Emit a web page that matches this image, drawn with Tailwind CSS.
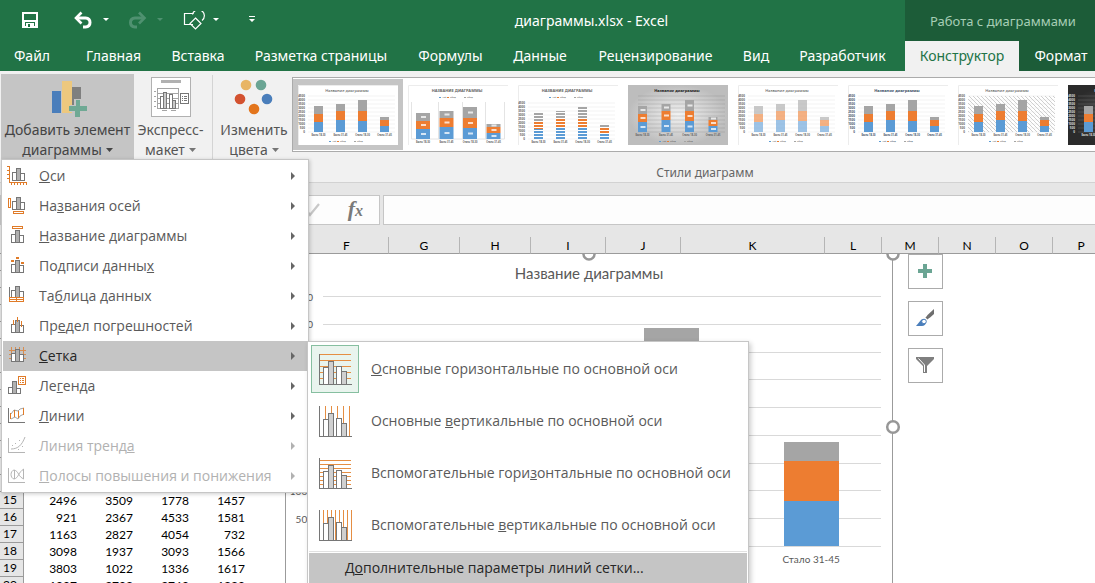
<!DOCTYPE html>
<html lang="ru">
<head>
<meta charset="utf-8">
<title>диаграммы.xlsx - Excel</title>
<script src="https://cdn.jsdelivr.net/npm/@tailwindcss/browser@4"></script>
</head>
<body class="relative flex h-screen flex-col overflow-hidden bg-white font-['Noto_Sans',sans-serif] text-[14px] leading-5 text-[#5a5a5a]">

<!-- shared drawings -->
<svg class="hidden" aria-hidden="true">
  <symbol id="bars" viewBox="0 0 13 13">
    <g stroke="#767676" fill="#fff"><path d="M.5 4.5h4v8h-4zM8.5 5.5h4v7h-4z"/><path fill="#b1b1b1" d="M4.500 .5h4v12h-4z"/></g>
  </symbol>
  <symbol id="chart4" viewBox="0 0 34 34">
    <g stroke="#767676" fill="#fff"><path d="M4.500 13.500h5v17h-5zM17.500 12.500h5v18h-5z"/><path fill="#d0d0d0" d="M9.500 7.500h5v23h-5zM22.500 17.500h5v13h-5z"/><path fill="none" stroke="#767676" d="M.5 0v30.500h32"/></g>
  </symbol>
</svg>

<header class="flex h-[71px] shrink-0 bg-[#217346] text-white">
  <div class="flex min-w-0 flex-1 flex-col">
    <div class="flex h-[41px] items-center">
      <div class="flex w-[278px] items-center pl-[20px]">
        <button aria-label="Сохранить" class="h-5 w-5"><svg width="20" height="20" viewBox="0 0 20 20" shape-rendering="crispEdges"><path fill="#fff" d="M2 1h16v16H2z"/><path fill="#217346" d="M4 3h12v6H4zM5 11h10v4H5z"/><path fill="#fff" d="M6 12h8v5H6z"/><path fill="#217346" d="M8 13h2v3H8z"/></svg></button>
        <button aria-label="Отменить" class="ml-[33px] h-5 w-5"><svg width="20" height="20" viewBox="0 0 20 20" fill="none" stroke="#fff" stroke-width="3"><path d="M4 7h8.500c6 .5 6 8.500 0 9H10"/><path stroke-width="2.600" d="M8.500 1.500L3 7l5.500 5.500"/></svg></button>
        <button aria-label="Список отмены" class="ml-[9px] h-5 w-2"><svg width="8" height="20"><path fill="#fff" d="M1 7h6L4 10z"/></svg></button>
        <button aria-label="Вернуть" disabled class="ml-[17px] h-5 w-5"><svg width="20" height="20" viewBox="0 0 20 20" fill="none" stroke="#4f9170" stroke-width="3"><path d="M16 7H8c-6 .5-6 8.500 0 9h2"/><path stroke-width="2.600" d="M12 1.500L17.500 7 12 12.500"/></svg></button>
        <button aria-label="Список возврата" disabled class="ml-[9px] h-5 w-2"><svg width="8" height="20"><path fill="#4f9170" d="M1 7h6L4 10z"/></svg></button>
        <button aria-label="Фигуры" class="ml-[19px] h-5 w-[22px]"><svg width="22" height="20" viewBox="0 0 22 20" fill="none" stroke="#fff" stroke-width="1.200"><path d="M10 13.500H1.500v-11h9"/><path d="M9.500 3.500a6 6 0 1 1 9.500 6"/><path d="M12.500 7l5.500 5.500-5.500 5.500L7 12.500z"/></svg></button>
        <button aria-label="Список фигур" class="ml-[7px] h-5 w-2"><svg width="8" height="20"><path fill="#fff" d="M1 7h6L4 10z"/></svg></button>
        <button aria-label="Настройка панели" class="ml-[28px] h-5 w-2"><svg width="8" height="20"><path fill="#fff" d="M1 5h6v1H1zM1 8h6l-3 3z"/></svg></button>
      </div>
      <h1 class="flex-1 text-center">диаграммы.xlsx - Excel</h1>
    </div>
    <nav class="flex h-[30px] items-center whitespace-nowrap">
      <button class="w-[70px] pr-[6px] text-center">Файл</button>
      <button class="w-[87px] text-center">Главная</button>
      <button class="w-[82px] text-center">Вставка</button>
      <button class="w-[164px] text-center">Разметка страницы</button>
      <button class="w-[95px] text-center">Формулы</button>
      <button class="w-[84px] text-center">Данные</button>
      <button class="w-[147px] text-center">Рецензирование</button>
      <button class="w-[54px] text-center">Вид</button>
      <button class="w-[119px] text-center">Разработчик</button>
    </nav>
  </div>
  <div class="flex w-[190px] shrink-0 flex-col bg-[#1c5c38]">
    <div class="flex h-[41px] items-center justify-center pl-[6px] text-[13px] text-[#a6cdb5]">Работа с диаграммами</div>
    <div class="flex h-[30px] whitespace-nowrap">
      <button class="w-[114px] bg-[#f1f1f1] text-center text-[#217346]">Конструктор</button>
      <button class="flex-1 pl-[8px] text-center">Формат</button>
    </div>
  </div>
</header>

<section class="flex h-[112px] shrink-0 items-start overflow-hidden border-b border-[#d2d2d2] bg-[#f1f1f1] text-[#555]">
  <button class="mt-[3px] ml-px flex h-[86px] w-[133px] shrink-0 flex-col items-center whitespace-nowrap bg-[#c5c5c5] text-[#444]">
    <svg width="40" height="46" viewBox="0 0 40 46"><g shape-rendering="crispEdges"><path fill="#4a7ebb" d="M4 17h9v22H4z"/><path fill="#edc87e" d="M14 7h10v32H14z"/><path fill="#7f7f7f" d="M24 13h9v18h-9z"/><path fill="#c5c5c5" d="M26 25h8v6h6v8h-14v-1h-4v-7h4z"/><path fill="#6fa994" d="M28 26h4v6h7v5h-7v6h-5v-6h-6v-5h7z"/></g></svg>
    <span class="block">Добавить элемент</span>
    <span class="flex items-center gap-1">диаграммы<svg width="7" height="4"><path fill="#444" d="M0 0h7L3.500 4z"/></svg></span>
  </button>
  <button class="mt-[3px] ml-px flex h-[86px] w-[71px] shrink-0 flex-col items-center whitespace-nowrap">
    <svg width="42" height="46" viewBox="0 0 42 46" shape-rendering="crispEdges"><path fill="#fff" stroke="#b1b1b1" d="M1.500 3.500h39v39h-39z"/><path fill="#b1b1b1" d="M11 6h20v3H11z"/><g stroke="#767676" fill="#fff"><path stroke="#a5a5a5" fill="none" d="M7.500 14.500h21v20h-21zM7.500 19.500h21M7.500 24.500h21M7.500 29.500h21M3.500 17.500h2M3.500 22.500h2M3.500 27.500h2M3.500 32.500h2M11.500 36.500h5M20.500 36.500h5"/><path d="M10.500 22.500h3v12h-3zM19.500 20.500h3v14h-3z"/><path fill="#c8c8c8" d="M13.500 18.500h3v16h-3zM22.500 26.500h3v8h-3z"/><path d="M30.500 19.500h8v10h-8z"/><path d="M32 22.500h1M34 22.500h3M32 24.500h1M34 24.500h3M32 26.500h1M34 26.500h3"/></g></svg>
    <span class="block">Экспресс-</span>
    <span class="flex items-center gap-1">макет<svg width="7" height="4"><path fill="#767676" d="M0 0h7L3.500 4z"/></svg></span>
  </button>
  <div class="mt-[4px] ml-[6px] h-[90px] w-px shrink-0 bg-[#d4d4d4]"></div>
  <button class="mt-[3px] ml-[6px] flex h-[86px] w-[70px] shrink-0 flex-col items-center whitespace-nowrap">
    <svg width="42" height="46" viewBox="0 0 42 46"><circle cx="13" cy="11" r="5.300" fill="#e8b565"/><circle cx="28" cy="11" r="5.300" fill="#6ba594"/><circle cx="7" cy="25" r="5.300" fill="#d35230"/><circle cx="34" cy="25" r="5.300" fill="#4a7ebb"/><circle cx="21" cy="35" r="5.300" fill="#e3751c"/></svg>
    <span class="block">Изменить</span>
    <span class="flex items-center gap-1">цвета<svg width="7" height="4"><path fill="#767676" d="M0 0h7L3.500 4z"/></svg></span>
  </button>
  <div class="mt-[6px] ml-[3px] w-[826px] shrink-0">
    <div id="gallery" class="flex h-[75px] items-center border border-[#ababab] bg-white"></div>
    <div class="pt-[11px] text-center text-[12px] text-[#666]">Стили диаграмм</div>
  </div>
</section>

<div class="flex h-[54px] shrink-0 items-center bg-[#e6e6e6]">
  <div class="flex h-[30px] w-[380px] shrink-0 items-center justify-end border border-[#c6c6c6] bg-[#fdfdfd] pr-[16px]">
    <svg width="14" height="20" viewBox="0 0 14 20" class="mr-[28px]"><path d="M1 11l3 4L13 4" fill="none" stroke="#c8c8c8" stroke-width="2.200"/></svg>
    <button aria-label="Вставить функцию" class="font-['Liberation_Serif',serif] text-[22px] font-bold italic text-[#7a7a7a]">f<span class="text-[16px]">x</span></button>
  </div>
  <input aria-label="Строка формул" class="ml-[3px] h-[30px] min-w-0 flex-1 border border-r-0 border-[#c6c6c6] bg-[#fdfdfd] px-2">
</div>

<main class="relative min-h-0 flex-1 overflow-hidden font-[Lato,sans-serif] text-[12px] text-black">
  <table class="w-[1110px] table-fixed border-separate border-spacing-0 leading-4">
    <thead>
      <tr id="letters" class="h-[17px] bg-[#e6e6e6] leading-[14px]"></tr>
    </thead>
    <tbody id="rows"></tbody>
  </table>

  <!-- chart object floating over the cells -->
  <div class="absolute top-[17px] left-[285px] h-[400px] w-[608px] overflow-hidden border-x border-[#9b9b9b] bg-white text-[#595959]">
    <h2 class="pt-[9px] text-center text-[15px] leading-5">Название диаграммы</h2>
    <div class="mt-[13px] grid h-[251px] pr-[11px] pl-[7px] text-[10px]">
      <div id="scale" class="flex flex-col justify-between [grid-area:1/1]"></div>
      <div id="columns" class="ml-[29px] grid grid-cols-4 items-end pb-px [grid-area:1/1]"></div>
    </div>
    <div class="mr-[11px] ml-[36px] grid grid-cols-4 pt-[4px] text-center text-[10px] leading-4">
      <span>Было 18-30</span><span>Было 31-45</span><span>Стало 18-30</span><span>Стало 31-45</span>
    </div>
  </div>
  <div class="absolute top-[17px] left-[580px] h-[7px] w-[18px] overflow-hidden"><svg class="block" width="18" height="7"><circle cx="9" cy="0" r="5.500" fill="#fff" stroke="#979797" stroke-width="2.500"/></svg></div>
  <div class="absolute top-[17px] left-[884px] h-[7px] w-[18px] overflow-hidden"><svg class="block" width="18" height="7"><circle cx="9" cy="0" r="5.500" fill="#fff" stroke="#979797" stroke-width="2.500"/></svg></div>
  <svg class="absolute top-[181px] left-[884px]" width="18" height="18"><circle cx="9" cy="9" r="5.800" fill="#fff" stroke="#979797" stroke-width="2.500"/></svg>

  <div class="absolute top-[17px] left-[908px] flex flex-col gap-[12px]">
    <button aria-label="Элементы диаграммы" class="h-[35px] w-[35px] border border-[#ababab] bg-white"><svg width="33" height="33" shape-rendering="crispEdges"><path fill="#6ba594" d="M14 9h4v5h5v4h-5v5h-4v-5H9v-4h5z"/></svg></button>
    <button aria-label="Стили диаграмм" class="h-[35px] w-[35px] border border-[#ababab] bg-white"><svg width="33" height="33"><path fill="#6e6e6e" d="M25 7v5l-4.500 4-2.500-2.500z"/><path stroke="#6e6e6e" stroke-width="3" d="M19.500 14.500l-2 2"/><path fill="#4a7ebb" d="M7 24l5-6c2-2 5-.5 5 2s-2 4-4 4z"/><circle cx="15" cy="19.500" r="2.300" fill="#fff" stroke="#4a7ebb"/></svg></button>
    <button aria-label="Фильтры диаграммы" class="h-[35px] w-[35px] border border-[#ababab] bg-white"><svg width="33" height="33"><path fill="#7f7f7f" d="M7 8h18v2l-7 7v7h-4v-7L7 10z"/><path stroke="#fff" fill="none" d="M9.500 9.500l6 6.500v7"/></svg></button>
  </div>
</main>

<!-- drop-down menu -->
<div role="menu" id="menu" class="absolute top-[159px] left-px flex w-[308px] flex-col border border-[#c6c6c6] bg-white p-px font-['Open_Sans',sans-serif] shadow-[1px_1px_4px_rgba(0,0,0,0.2)]"></div>

<!-- gridlines submenu -->
<div role="menu" class="absolute top-[341px] left-[307px] flex w-[442px] flex-col border border-[#c6c6c6] bg-white px-px pt-px font-['Open_Sans',sans-serif] shadow-[2px_2px_5px_rgba(0,0,0,0.2)]">
  <button role="menuitem" class="flex h-[52px] items-center gap-[12px] whitespace-nowrap pl-[2px] text-left">
    <span class="flex h-12 w-12 shrink-0 items-center justify-center border border-[#86bfa0] bg-[#e9f4ee]"><svg width="34" height="34" class="mt-[3px] ml-[2px]" shape-rendering="crispEdges"><path stroke="#e58e43" d="M0 .5h32M0 6.500h32M0 12.500h32M0 18.500h32M0 24.500h32"/><use href="#chart4" width="34" height="34"/></svg></span>
    <span><u>О</u>сновные горизонтальные по основной оси</span>
  </button>
  <button role="menuitem" class="flex h-[52px] items-center gap-[12px] whitespace-nowrap pl-[2px] text-left">
    <span class="flex h-12 w-12 shrink-0 items-center justify-center"><svg width="34" height="34" class="mt-[3px] ml-[2px]" shape-rendering="crispEdges"><path stroke="#e58e43" d="M6.500 0v30M12.500 0v30M18.500 0v30M24.500 0v30M30.500 0v30"/><use href="#chart4" width="34" height="34"/></svg></span>
    <span>Основные <u>в</u>ертикальные по основной оси</span>
  </button>
  <button role="menuitem" class="flex h-[52px] items-center gap-[12px] whitespace-nowrap pl-[2px] text-left">
    <span class="flex h-12 w-12 shrink-0 items-center justify-center"><svg width="34" height="34" class="mt-[3px] ml-[2px]" shape-rendering="crispEdges"><path stroke="#e58e43" d="M0 2.500h32M0 6.500h32M0 10.500h32M0 14.500h32M0 18.500h32M0 22.500h32M0 26.500h32"/><use href="#chart4" width="34" height="34"/></svg></span>
    <span>Вспомогательные гори<u>з</u>онтальные по основной оси</span>
  </button>
  <button role="menuitem" class="flex h-[52px] items-center gap-[12px] whitespace-nowrap pl-[2px] text-left">
    <span class="flex h-12 w-12 shrink-0 items-center justify-center"><svg width="34" height="34" class="mt-[3px] ml-[2px]" shape-rendering="crispEdges"><path stroke="#e58e43" d="M4.500 0v30M8.500 0v30M12.500 0v30M16.500 0v30M20.500 0v30M24.500 0v30M28.500 0v30M32.500 0v30"/><use href="#chart4" width="34" height="34"/></svg></span>
    <span>Вспомогательные <u>в</u>ертикальные по основной оси</span>
  </button>
  <button role="menuitem" class="border-t border-[#e1e1e1] pt-px text-left text-[#262626]"><span class="flex h-[30px] items-center bg-[#c5c5c5] pl-[36px]"><span>Д<u>о</u>полнительные параметры линий сетки...</span></span></button>
</div>

<script>
  // Top-level menu entries: label, icon drawing, state
  const O = '#e07b28', G = '#767676', L = '#b5b5b5';
  const bars = (x, y) => `<use href="#bars" x="${x}" y="${y}" width="13" height="13"/>`;
  const menu = [
    ['<u>О</u>си', bars(8, 7) + `<path stroke="${O}" fill="none" d="M5.500 5v16.500h17M3 5.500h2M3 9.500h2M3 13.500h2M3 17.500h2M7.500 22v2M10.500 22v2M13.500 22v2M16.500 22v2M19.500 22v2M22.500 22v2"/>`],
    ['На<u>з</u>вания осей', bars(8, 6) + `<path stroke="${O}" fill="none" d="M4.500 7.500h2v9h-2zM9.500 20.500h10v2h-10z"/>`],
    ['<u>Н</u>азвание диаграммы', bars(7, 9) + `<path stroke="${O}" fill="none" d="M8.500 5.500h10v2h-10z"/>`],
    ['Подписи данны<u>х</u>', bars(7, 9) + `<path fill="${O}" d="M7 9h3v2H7zM12 6h3v2h-3zM17 11h3v2h-3z"/>`],
    ['Та<u>б</u>лица данных', bars(7, 5) + `<path stroke="${G}" d="M5.500 6v11"/><path stroke="${O}" fill="#fff" d="M5.500 16.500h14v4h-14zM5.500 18.500h14M12.500 16.500v4"/>`],
    ['Пр<u>е</u>дел погрешностей', bars(7, 9) + `<path stroke="${O}" d="M9.500 9v5M13.500 6v5M17.500 10v6"/>`],
    ['<u>С</u>етка', `<path stroke="${O}" opacity=".75" d="M5 9.500h17M5 13.500h17M5 17.500h17M7.500 6v14M11.500 6v14M15.500 6v14M19.500 6v14"/>` + bars(7, 8), 'on'],
    ['Ле<u>г</u>енда', `<path stroke="${G}" fill="#fff" d="M4.500 16.500h4v6h-4zM12.500 17.500h4v5h-4z"/><path stroke="${G}" fill="#b1b1b1" d="M8.500 10.500h4v12h-4z"/><path stroke="${O}" fill="#fff" d="M14.500 5.500h7v8h-7z"/><path stroke="${O}" d="M16 7.500h1M18 7.500h2M16 9.500h1M18 9.500h2M16 11.500h1M18 11.500h2"/>`],
    ['<u>Л</u>инии', `<path stroke="${G}" fill="none" d="M4.500 7v14.500H21"/><g shape-rendering="auto" fill="none"><path stroke="#a5a5a5" d="M7 13l3-4 4 1 2-2 4-1M7 18l4-2 3 2 2-3 4-2"/><path stroke="${O}" d="M6.500 12v6M10.500 9v7M14.500 10v7M19.500 7v7"/></g>`],
    ['Линия тренд<u>а</u>', `<path stroke="${L}" fill="none" d="M4.500 7v14.500H21"/><path shape-rendering="auto" stroke="${L}" fill="none" d="M7 18c7 0 11-4 14-12"/><path fill="${L}" d="M8 14h1v1H8zM11 12h1v1h-1zM15 9h1v1h-1zM14 18h1v1h-1zM18 15h1v1h-1z"/>`, 'off'],
    ['<u>П</u>олосы повышения и понижения', `<path stroke="${L}" fill="none" d="M4.500 7v14.500H21"/><path shape-rendering="auto" stroke="${L}" fill="none" d="M20 8c-6 3-5 9-10 10-4-1-4-8 0-9 5 1 4 7 10 9M10.500 9v9M19.500 8v10"/>`, 'off'],
  ];
  document.getElementById('menu').innerHTML = menu.map(([label, icon, state]) => {
    const cls = state === 'on' ? 'flex h-[30px] items-center whitespace-nowrap bg-[#c5c5c5] text-left text-[#262626]'
      : state === 'off' ? 'flex h-[30px] items-center whitespace-nowrap text-left text-[#b1b1b1]'
      : 'flex h-[30px] items-center whitespace-nowrap text-left';
    return `<button role="menuitem" class="${cls}"${state === 'off' ? ' disabled' : ''}>
      <svg class="ml-px shrink-0" width="24" height="30" shape-rendering="crispEdges">${icon}</svg>
      <span class="ml-[11px] flex-1">${label}</span>
      <svg class="mr-[12px] shrink-0" width="4" height="8"><path fill="${state === 'off' ? '#b1b1b1' : '#666'}" d="M0 0l4 4-4 4z"/></svg></button>`;
  }).join('');

  // Sheet
  const cols = { A: 56, B: 56, C: 56, D: 56, E: 57, F: 84, G: 71, H: 71, I: 75, J: 75, K: 144, L: 57, M: 57, N: 57, O: 57, P: 57 };
  document.getElementById('letters').innerHTML = '<th class="w-[24px] border-r border-b border-[#9b9b9b] p-0"></th>' +
    Object.entries(cols).map(([c, w]) => `<th class="border-r border-b border-r-[#b5b5b5] border-b-[#9b9b9b] p-0 pt-[2px] font-normal" style="width:${w}px">${c}</th>`).join('');
  const data = {
    15: [2496, 3509, 1778, 1457], 16: [921, 2367, 4533, 1581], 17: [1163, 2827, 4054, 732],
    18: [3098, 1937, 3093, 1566], 19: [3803, 1022, 1336, 1617], 20: [1997, 3792, 3769, 1229],
  };
  let rows = '';
  for (let r = 1; r <= 20; r++) {
    const v = data[r] || ['', '', '', ''];
    rows += `<tr class="h-[17px]"><th class="border-r border-b border-[#9b9b9b] bg-[#e6e6e6] p-0 pr-[3px] font-normal">${r}</th>` +
      v.map(n => `<td class="p-0 pr-[3px] text-right">${n}</td>`).join('') + '<td colspan="12" class="p-0"></td></tr>';
  }
  document.getElementById('rows').innerHTML = rows;

  // Chart: value axis and stacked columns, heights in pixels of a 250px plot
  document.getElementById('scale').innerHTML = [4500, 4000, 3500, 3000, 2500, 2000, 1500, 1000, 500, 0].map(n =>
    `<div class="flex h-px items-center gap-[9px]"><span class="flex w-[21px] justify-end pr-px leading-3">${n}</span><span class="h-px flex-1 bg-[#d9d9d9]"></span></div>`).join('');
  const stacks = [[66, 55, 57], [81, 58, 48], [78, 66, 74], [45, 40, 19]];
  document.getElementById('columns').innerHTML = stacks.map(([b, o, g]) =>
    `<div class="mx-auto flex w-[55px] flex-col"><div class="bg-[#a5a5a5]" style="height:${g}px"></div><div class="bg-[#ed7d31]" style="height:${o}px"></div><div class="bg-[#5b9bd5]" style="height:${b}px"></div></div>`).join('');

  // Style gallery thumbnails
  const styles = [
    { sel: 1, axis: 1 }, { caps: 1, top: 1, vals: 1, wide: 1 }, { caps: 1, top: 1, axis: 1, stripe: 1 },
    { bg: 'url(#silver)', vals: 1, bold: 1 }, { axis: 1, fade: .6 }, { axis: 1, bold: 1, tint: '#44546a' },
    { axis: 1, hatch: 1 }, { axis: 1, bold: 1, bg: 'url(#coal)', tint: '#ddd' },
  ];
  const defs = `<svg class="absolute h-0 w-0" aria-hidden="true"><defs>
    <radialGradient id="silver"><stop offset="0" stop-color="#f2f2f2"/><stop offset="1" stop-color="#bdbdbd"/></radialGradient>
    <radialGradient id="coal"><stop offset="0" stop-color="#595959"/><stop offset="1" stop-color="#2b2b2b"/></radialGradient>
    <pattern id="hatch" width="4" height="4" patternUnits="userSpaceOnUse"><path stroke="#cfcfcf" d="M0 0l4 4"/></pattern>
    <pattern id="lines" width="3" height="3" patternUnits="userSpaceOnUse"><path fill="#fff" d="M0 0h3v1H0z"/></pattern></defs></svg>`;
  const thumb = s => {
    const ink = s.tint || '#666', base = s.top ? 54 : 47, w = s.wide ? 14 : 9;
    let d = `<rect width="100" height="60" fill="${s.bg || '#fff'}"/><path stroke="${s.bg ? 'none' : '#ececec'}" fill="none" d="M.5 60V.5H100"/>`;
    if (s.hatch) d += '<rect x="10" y="11" width="87" height="36" fill="url(#hatch)"/>';
    const step = 4;
    for (let i = 0; i < 10; i++) {
      const y = base - i * step;
      if (!s.wide) d += `<path stroke="${s.bg ? '#8a8a8a' : '#d9d9d9'}" stroke-opacity=".5" stroke-width=".6" d="M10 ${y}h87"/>`;
      if (s.axis) d += `<text x="7" y="${y + 1}" font-size="3" font-weight="700" text-anchor="end" fill="${ink}">${i * 500}</text>`;
    }
    if (s.wide) d += '<path stroke="#e4e4e4" fill="none" d="M3.500 17v37h93v-37M30.500 17v37M54.500 17v37M77.500 17v37"/>';
    [[10, 8, 8], [12, 9, 7], [11, 10, 11], [6, 6, 3]].forEach(([b, o, g], i) => {
      const x = (s.wide ? 8 : s.vals ? 10 : 16) + i * (s.wide || s.vals ? 23.500 : 22);
      let y = base;
      [[b, '#5b9bd5'], [o, '#ed7d31'], [g, '#a5a5a5']].forEach(([h, c]) => {
        y -= h;
        d += `<rect x="${x}" y="${y}" width="${w}" height="${h}" fill="${c}" opacity="${s.fade || 1}"/>`;
        if (s.vals) d += `<rect x="${x + w / 2 - 2}" y="${y + h / 2 - 1}" width="5" height="2" fill="#fff" opacity=".75"/>`;
      });
      if (s.stripe) d += `<rect x="${x}" y="${y}" width="${w}" height="${base - y}" fill="url(#lines)"/>`;
      d += `<text x="${x + w / 2}" y="${base + 4}" font-size="2.500" font-weight="700" text-anchor="middle" fill="${ink}">${i < 2 ? 'Было' : 'Стало'} ${i % 2 ? '31-45' : '18-30'}</text>`;
    });
    d += `<text x="49" y="6.500" font-size="4" font-weight="${s.bold || s.caps ? 700 : 500}" text-anchor="middle" fill="${s.bold && !s.tint ? '#222' : ink}">${s.caps ? 'НАЗВАНИЕ ДИАГРАММЫ' : 'Название диаграммы'}</text>`;
    const ly = s.top ? 12 : 56;
    d += `<path fill="#5b9bd5" d="M31 ${ly}h2v1h-2z"/><path fill="#ed7d31" d="M39 ${ly}h2v1h-2z"/><path fill="#a5a5a5" d="M56 ${ly}h2v1h-2z"/>
      <g font-size="2.500" fill="${ink}"><text x="34" y="${ly + 1}">чай</text><text x="42" y="${ly + 1}">обед</text><text x="59" y="${ly + 1}">обед</text></g>`;
    const cls = s.sel ? 'flex h-[71px] w-[110px] shrink-0 items-center justify-center bg-[#c5c5c5]' : 'flex h-[71px] w-[110px] shrink-0 items-center justify-center';
    return `<button aria-label="Стиль диаграммы" class="${cls}"><svg width="100" height="60">${d}</svg></button>`;
  };
  document.getElementById('gallery').innerHTML = defs + styles.map(thumb).join('');
</script>
</body>
</html>
